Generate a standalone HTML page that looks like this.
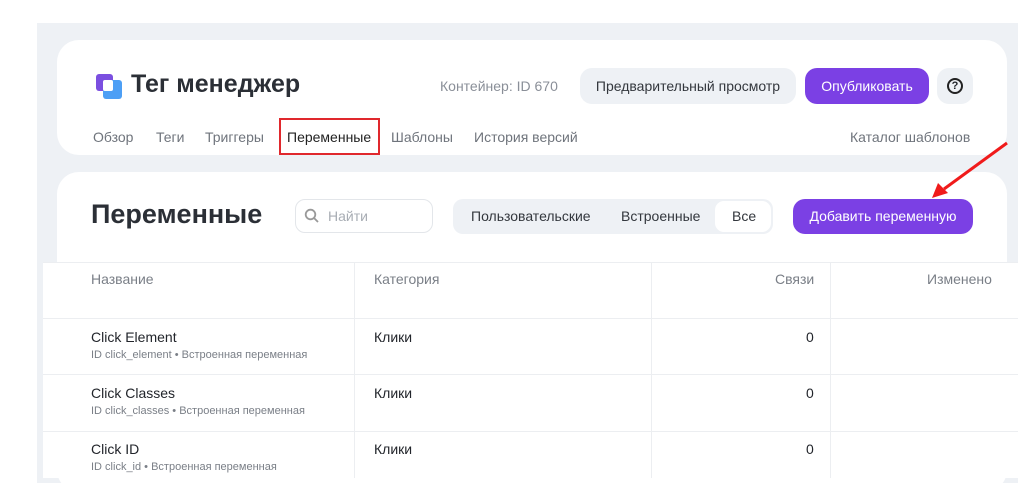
<!DOCTYPE html>
<html><head><meta charset="utf-8"><style>
*{box-sizing:border-box;margin:0;padding:0}
body{width:1031px;height:478px;overflow:hidden;background:#fff;font-family:"Liberation Sans",sans-serif;position:relative;color:#22252b}
.a{position:absolute;white-space:nowrap}
.bg{left:37px;top:23px;width:981px;height:460px;background:#eef1f5}
.card{background:#fff;border-radius:22px}
.btn{border-radius:12px;font-size:14px;text-align:center}
.ln{background:#eceef1}
</style></head><body>
<div class="a bg"></div>
<div class="a card" style="left:57px;top:40px;width:950px;height:115px"></div>
<div class="a card" style="left:57px;top:172px;width:950px;height:320px"></div>
<div class="a" style="left:43px;top:262px;width:975px;height:216px;background:#fff;border-top:1px solid #eceef1"></div>
<!-- logo -->
<div class="a" style="left:96px;top:74px;width:17px;height:17px;background:#7b4fe0;border-radius:3px"></div>
<div class="a" style="left:103px;top:80px;width:19px;height:19px;background:#4d9ff5;border-radius:3px"></div>
<div class="a" style="left:103px;top:80px;width:10px;height:11px;background:#fff;border-radius:2px"></div>
<div class="a" style="left:131px;top:70px;font-size:25px;font-weight:bold;color:#2b2f36">Тег менеджер</div>
<div class="a" style="left:440px;top:78px;font-size:14px;color:#8a8f98">Контейнер: ID 670</div>
<div class="a btn" style="left:580px;top:68px;width:216px;height:36px;line-height:36px;background:#eef1f5;color:#33373d">Предварительный просмотр</div>
<div class="a btn" style="left:805px;top:68px;width:124px;height:36px;line-height:36px;background:#7b40e4;color:#fff">Опубликовать</div>
<div class="a btn" style="left:937px;top:68px;width:36px;height:36px;background:#eef1f5"><div style="margin:10px auto;width:16px;height:16px;border:2px solid #222;border-radius:50%;font-size:11px;font-weight:bold;line-height:12px">?</div></div>
<div class="a" style="left:93px;top:129px;font-size:14px;color:#6f747c">Обзор</div>
<div class="a" style="left:156px;top:129px;font-size:14px;color:#6f747c">Теги</div>
<div class="a" style="left:205px;top:129px;font-size:14px;color:#6f747c">Триггеры</div>
<div class="a" style="left:279px;top:118px;width:101px;height:37px;border:2px solid #e0282d"></div>
<div class="a" style="left:287px;top:129px;font-size:14px;color:#222">Переменные</div>
<div class="a" style="left:391px;top:129px;font-size:14px;color:#6f747c">Шаблоны</div>
<div class="a" style="left:474px;top:129px;font-size:14px;color:#6f747c">История версий</div>
<div class="a" style="left:850px;top:129px;font-size:14px;color:#6f747c">Каталог шаблонов</div>
<div class="a" style="left:91px;top:199px;font-size:27px;font-weight:bold;color:#2b2f36">Переменные</div>
<div class="a" style="left:295px;top:199px;width:138px;height:34px;border:1px solid #e3e6ea;border-radius:10px"></div>
<svg class="a" style="left:304px;top:208px" width="16" height="16" viewBox="0 0 16 16"><circle cx="6.5" cy="6.5" r="4.8" fill="none" stroke="#999" stroke-width="1.8"/><path d="M10 10l4 4" stroke="#999" stroke-width="1.8"/></svg>
<div class="a" style="left:328px;top:208px;font-size:14px;color:#a8adb4">Найти</div>
<div class="a" style="left:453px;top:199px;width:320px;height:35px;background:#eef1f5;border-radius:10px"></div>
<div class="a" style="left:715px;top:201px;width:56px;height:31px;background:#fff;border-radius:9px"></div>
<div class="a" style="left:471px;top:208px;font-size:14px;color:#33373d">Пользовательские</div>
<div class="a" style="left:621px;top:208px;font-size:14px;color:#33373d">Встроенные</div>
<div class="a" style="left:732px;top:208px;font-size:14px;color:#33373d">Все</div>
<div class="a btn" style="left:793px;top:199px;width:180px;height:35px;line-height:35px;background:#7b40e4;color:#fff">Добавить переменную</div>
<svg class="a" style="left:0;top:0" width="1031" height="478"><path d="M1007 143L944 189" stroke="#f01b1b" stroke-width="3"/><path d="M932 198l6-15 10 10z" fill="#f01b1b"/></svg>
<!-- table -->
<div class="a ln" style="left:354px;top:263px;width:1px;height:215px"></div>
<div class="a ln" style="left:651px;top:263px;width:1px;height:215px"></div>
<div class="a ln" style="left:830px;top:263px;width:1px;height:215px"></div>
<div class="a ln" style="left:43px;top:318px;width:975px;height:1px"></div>
<div class="a ln" style="left:43px;top:374px;width:975px;height:1px"></div>
<div class="a ln" style="left:43px;top:431px;width:975px;height:1px"></div>
<div class="a" style="left:91px;top:271px;font-size:14px;color:#7a7f87">Название</div>
<div class="a" style="left:374px;top:271px;font-size:14px;color:#7a7f87">Категория</div>
<div class="a" style="left:775px;top:271px;font-size:14px;color:#7a7f87">Связи</div>
<div class="a" style="left:927px;top:271px;font-size:14px;color:#7a7f87">Изменено</div>
<div class="a" style="left:91px;top:329px;font-size:14px">Click Element</div>
<div class="a" style="left:91px;top:349px;font-size:11px;color:#7a7f87">ID click_element • Встроенная переменная</div>
<div class="a" style="left:374px;top:329px;font-size:14px">Клики</div>
<div class="a" style="left:806px;top:329px;font-size:14px">0</div>
<div class="a" style="left:91px;top:385px;font-size:14px">Click Classes</div>
<div class="a" style="left:91px;top:405px;font-size:11px;color:#7a7f87">ID click_classes • Встроенная переменная</div>
<div class="a" style="left:374px;top:385px;font-size:14px">Клики</div>
<div class="a" style="left:806px;top:385px;font-size:14px">0</div>
<div class="a" style="left:91px;top:441px;font-size:14px">Click ID</div>
<div class="a" style="left:91px;top:461px;font-size:11px;color:#7a7f87">ID click_id • Встроенная переменная</div>
<div class="a" style="left:374px;top:441px;font-size:14px">Клики</div>
<div class="a" style="left:806px;top:441px;font-size:14px">0</div>
</body></html>
